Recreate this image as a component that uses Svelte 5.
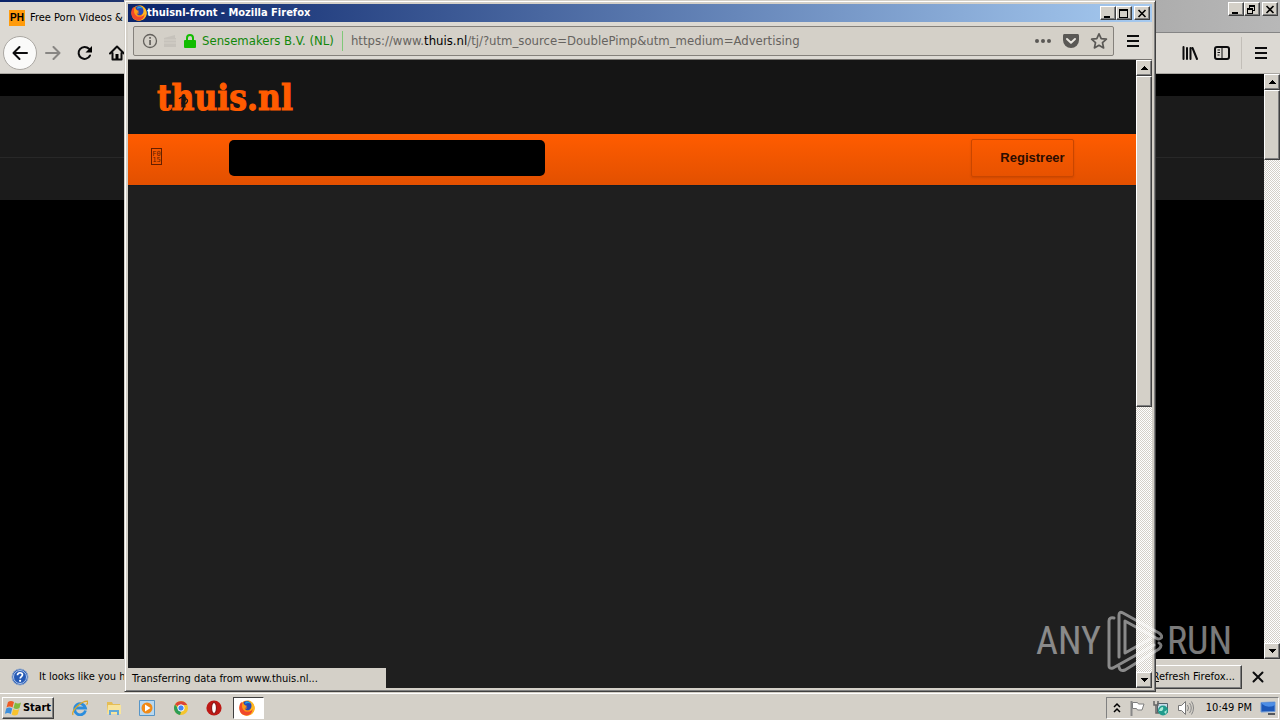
<script>
  let query = $state('');
  const launchers = ['Internet Explorer', 'Explorer', 'Media Player', 'Chrome', 'Opera'];
</script>

{#snippet firefox(size)}
  <svg width={size} height={size} viewBox="0 0 16 16" aria-hidden="true">
    <circle cx="8" cy="8" r="7.6" fill="#ff8a12" />
    <path d="M8 .3c4 0 7.7 3.3 7.7 7.7S12.4 15.7 8 15.7c-3 0-5.600-1.500-7-4 3 2.500 8 2.300 10-1C12.500 7 11 2 8 .3z" fill="#ffb820" />
    <path d="M1 11.500C-.5 7.500.5 4 2.500 1.800c0 1 .3 1.700 1 2.200C2.500 7 4 11.500 8 11.800c4 0 5-2 5.500-3 .3 4-3 6.700-6 6.600C4 15.300 2 13.500 1 11.500z" fill="#f0492c" />
    <path d="M4.500 2.200C7 .2 10.800.8 12 3.500c1.200 3 .2 5.800-2.500 6.800-2.500.3-4-.5-4.200-2.100 1 .7 2.200.6 3.200-.4-1.700-.3-3-1-2.600-2.600-.8-.7-1.300-1.900-1.400-3z" fill="#2747b8" />
    <path d="M6.500 1.600c2-.6 4.500.1 5.500 2.200-2-1-3.800-1-5.800.4z" fill="#26a6e0" />
    <path d="M3.300 4c1 0 2 .4 2.700 1.200L8.300 6 6.200 7.300C5 8.500 6 10 8 10.300c-3 1-5.500-1.500-4.700-6.300z" fill="#ff9b17" />
  </svg>
{/snippet}

{#snippet hamburger()}
  <svg width="16" height="16" viewBox="0 0 16 16" aria-hidden="true" shape-rendering="crispEdges">
    <path d="M2 3h12M2 8h12M2 13h12" stroke="#0c0c0d" stroke-width="2" />
  </svg>
{/snippet}

{#snippet scrollbar(share)}
  <div class="scrollbar">
    <button class="bevel scroll-step" aria-label="Scroll up">
      <svg width="8" height="4" viewBox="0 0 8 4" shape-rendering="crispEdges"><path d="M0 4 4 0l4 4z" /></svg>
    </button>
    <div class="track"><div class="bevel thumb" style="height: {share}%"></div></div>
    <button class="bevel scroll-step" aria-label="Scroll down">
      <svg width="8" height="4" viewBox="0 0 8 4" shape-rendering="crispEdges"><path d="m0 0 4 4 4-4z" /></svg>
    </button>
  </div>
{/snippet}

{#snippet controls(restored)}
  <div class="controls">
    <button class="bevel" aria-label="Minimize">
      <svg width="10" height="9" shape-rendering="crispEdges"><path d="M1 7h6v2H1z" /></svg>
    </button>
    <button class="bevel" aria-label={restored ? 'Maximize' : 'Restore'}>
      <svg width="10" height="9" viewBox="0 0 10 9" shape-rendering="crispEdges">
        {#if restored}
          <path d="M0 0h9v9H0zM1 2v6h7V2z" fill-rule="evenodd" />
        {:else}
          <path d="M2 0h6v6H6V5h1V2H3v1H2zM0 3h6v6H0zM1 5v3h4V5z" fill-rule="evenodd" />
        {/if}
      </svg>
    </button>
    <button class="bevel close" aria-label="Close">
      <svg width="10" height="9" viewBox="0 0 10 9"><path d="m1.500 1 7 7m0-7-7 7" stroke="#000" stroke-width="1.600" /></svg>
    </button>
  </div>
{/snippet}

<div class="desktop">
  <section class="browser" aria-label="Browser">
    <header class="tabstrip">
      <div class="tab"><span class="favicon">PH</span><span>Free Porn Videos &amp;</span></div>
      <div class="strip-end">{@render controls(false)}</div>
    </header>
    <nav class="toolbar">
      <button class="tool back" aria-label="Back">
        <svg width="16" height="16" viewBox="0 0 16 16"><path d="M15 8H2M7.500 2 1.500 8l6 6" class="line" /></svg>
      </button>
      <button class="tool" aria-label="Forward">
        <svg class="dim" width="16" height="16" viewBox="0 0 16 16"><path d="M1 8h13M8.500 2l6 6-6 6" class="line" /></svg>
      </button>
      <button class="tool" aria-label="Reload">
        <svg width="16" height="16" viewBox="0 0 16 16"><path d="M13 10.500A6 6 0 1 1 12 3.800" class="line" /><path d="M15 1v6.500H8.500z" /></svg>
      </button>
      <button class="tool" aria-label="Home">
        <svg width="16" height="16" viewBox="0 0 16 16"><path d="M1 8.500 8 1.500l7 7M3.500 8v6.500h9V8" class="line" /><path d="M6.500 9h3v5h-3z" /></svg>
      </button>
      <span class="grow"></span>
      <button class="tool" aria-label="Library">
        <svg width="16" height="16" viewBox="0 0 16 16"><path d="M1.500 2v12M5 3v11M8.500 3v11M10.500 3l4.500 11" class="line" /></svg>
      </button>
      <button class="tool" aria-label="Sidebars">
        <svg width="16" height="16" viewBox="0 0 16 16"><rect x="1" y="2" width="14" height="12" rx="2" class="line" /><path d="M8 2v12M3.500 5h2.500M3.500 7.500h2.500M3.500 10h2" fill="none" stroke="#0c0c0d" /></svg>
      </button>
      <span class="tool-rule"></span>
      <button class="tool menu" aria-label="Menu">{@render hamburger()}</button>
    </nav>
    <div class="viewport">
      <div class="dark-page"><div class="dark-head"></div><div class="dark-sub"></div></div>
      {@render scrollbar(12.7)}
    </div>
    <footer class="notice">
      <svg width="18" height="18" viewBox="0 0 18 18" aria-hidden="true">
        <circle cx="9" cy="9" r="8" fill="#2459b5" stroke="#8ea6c9" />
        <circle cx="9" cy="9" r="6.500" fill="none" stroke="#d4e2f7" stroke-width=".8" />
        <path d="M6.500 7.200c0-3.200 5-3.200 5-.4 0 1.800-2.300 1.800-2.300 3.700" fill="none" stroke="#fff" stroke-width="1.700" /><circle cx="9.100" cy="12.800" r="1.100" fill="#fff" />
      </svg>
      <span class="notice-text">It looks like you ha</span>
      <span class="grow"></span>
      <button class="bevel refresh"><span><u>R</u>efresh Firefox...</span></button>
      <button class="tool dismiss" aria-label="Dismiss">
        <svg width="12" height="12" viewBox="0 0 12 12"><path d="m1.500 1.500 9 9m0-9-9 9" class="line" /></svg>
      </button>
    </footer>
  </section>

  <section class="popup" aria-label="thuisnl-front">
    <header class="titlebar">
      {@render firefox(16)}
      <h1>thuisnl-front - Mozilla Firefox</h1>
      {@render controls(true)}
    </header>
    <nav class="location">
      <div class="urlbar">
        <svg width="16" height="16" viewBox="0 0 16 16" aria-hidden="true"><circle cx="8" cy="8" r="6.500" fill="none" stroke="#63605c" stroke-width="1.300" /><path d="M7.200 7h1.700v5H7.200zM7.200 4h1.700v1.700H7.200z" fill="#63605c" /></svg>
        <svg width="16" height="16" viewBox="0 0 16 16" aria-hidden="true"><path d="M2 5 13 2v3h1v9H2z" fill="#c6c2bb" /><path d="M2 7h12M2 10h12" stroke="#d4d0c8" /></svg>
        <svg width="16" height="16" viewBox="0 0 16 16" aria-hidden="true"><rect x="2" y="7" width="12" height="8" rx="1" fill="#12bc00" /><path d="M5 8V5a3 3 0 0 1 6 0v3" fill="none" stroke="#12bc00" stroke-width="2" /></svg>
        <span class="owner">Sensemakers B.V. (NL)</span>
        <span class="address">https://www.<b>thuis.nl</b>/tj/?utm_source=DoublePimp&amp;utm_medium=Advertising</span>
        <div class="actions">
          <button aria-label="Page actions"><svg width="18" height="18" viewBox="0 0 18 18" fill="#5a5855"><circle cx="3" cy="9" r="2" /><circle cx="9" cy="9" r="2" /><circle cx="15" cy="9" r="2" /></svg></button>
          <button aria-label="Save to Pocket"><svg width="18" height="18" viewBox="0 0 18 18"><path d="M2.500 2h13C16.400 2 17 2.600 17 3.500V8a8 8 0 0 1-16 0V3.500C1 2.600 1.600 2 2.500 2z" fill="#5a5855" /><path d="m5 7 4 3.700L13 7" fill="none" stroke="#e8e5df" stroke-width="2" stroke-linecap="round" stroke-linejoin="round" /></svg></button>
          <button aria-label="Bookmark"><svg width="18" height="18" viewBox="0 0 18 18"><path d="m9 1.800 2.200 4.800 5.200.6-3.900 3.500 1.100 5.200L9 13.300l-4.600 2.600 1.100-5.200-3.900-3.500 5.200-.6z" fill="none" stroke="#5a5855" stroke-width="1.700" stroke-linejoin="round" /></svg></button>
        </div>
      </div>
      <button class="tool popup-menu" aria-label="Menu">{@render hamburger()}</button>
    </nav>
    <div class="viewport">
      <main>
        <div class="brand">
          <a href="#home" aria-label="thuis.nl">thuis.nl
            <svg width="12" height="16" viewBox="0 0 12 16" aria-hidden="true"><path d="M2 3c2-3 7-2 7 0S5 5 5 7s3 1 2 4-2 2-2 5M9 3c3 1 1 4-1 5" fill="none" stroke="#151515" stroke-width="1.300" /></svg>
          </a>
        </div>
        <div class="orange">
          <a class="home" href="#home" aria-label="Home"><span>F0</span><span>15</span></a>
          <input class="search" type="text" aria-label="Search" bind:value={query} />
          <button class="register">Registreer</button>
        </div>
      </main>
      {@render scrollbar(55.5)}
      <div class="status">Transferring data from www.thuis.nl...</div>
    </div>
  </section>

  <div class="watermark" aria-hidden="true">
    <span>ANY</span>
    <svg width="58" height="64" viewBox="0 0 58 64">
      <g fill="none" stroke="#fff" stroke-width="3" stroke-linejoin="round" stroke-linecap="round">
        <path d="M9 9Q4 8 4 12v45q0 3 4 2l41-23" />
        <path d="M14 48V6q0-4 4-2l36 20q4 3 2 5-2 2-5 0L20 12v32l25-14" />
        <path d="M14 58q1 5 6 3l34-21q4-4 0-6" />
      </g>
    </svg>
    <span>RUN</span>
  </div>

  <footer class="taskbar">
    <button class="bevel start">
      <svg width="17" height="16" viewBox="0 0 17 16" aria-hidden="true"><path d="M3 2q3-2 6 0L7.500 7.500q-3-2-6 0z" fill="#ee5b24" /><path d="M10 2.500q3 2 6 0L14.500 8q-3 2-6 0z" fill="#82b93c" /><path d="M1.200 8.500q3-2 6 0L5.800 14q-3-2-6 0z" fill="#3d8fdc" /><path d="M8.200 9q3 2 6 0l-1.500 5.500q-3 2-6 0z" fill="#f9c32c" /></svg>
      <span>Start</span>
    </button>
    <div class="launchers">
      {#each launchers as name, i}
        <button aria-label={name}>
          <svg width="16" height="16" viewBox="0 0 16 16">
            {#if i === 0}
              <path d="M13.500 10.500A5.500 5.500 0 1 1 13.500 8H4" fill="none" stroke="#2b8ddd" stroke-width="2.800" /><path d="M1 15C-1 11 9 1 15.500 1.200c1 1-.5 3-1 3.500" fill="none" stroke="#d9a72c" stroke-width="1.300" />
            {:else if i === 1}
              <path d="M1 2h5l1 2h7v10H1z" fill="#e5bd55" /><path d="M2 5h13v9H1z" fill="#f8e49c" /><path d="M3 15v-5h10v5h-2v-3H5v3z" fill="#62a9d8" />
            {:else if i === 2}
              <path d="M.5.5h15v15H.5z" fill="#b9d8ef" stroke="#5795c7" /><circle cx="8" cy="8" r="5.500" fill="#f18a16" /><path d="m6 4.500 5.500 3.500L6 11.500z" fill="#fff" />
            {:else if i === 3}
              <circle cx="8" cy="8" r="7" fill="#f5c52d" /><path d="M8 8 2 4.500A7 7 0 0 1 14.200 5H8z" fill="#db4437" /><path d="M2 4.500 8 12l-1 3A7 7 0 0 1 2 4.500z" fill="#2c9d55" /><circle cx="8" cy="8" r="3.200" fill="#4285f4" stroke="#fff" />
            {:else}
              <circle cx="8" cy="8" r="7.600" fill="#bd1915" /><ellipse cx="8" cy="8" rx="2.400" ry="5.500" fill="#fff" stroke="#7d0d0c" />
            {/if}
          </svg>
        </button>
      {/each}
    </div>
    <button class="running" aria-label="Mozilla Firefox">{@render firefox(16)}</button>
    <div class="tray">
      <svg width="8" height="12" viewBox="0 0 8 12" aria-hidden="true"><path d="m1 5 3-3 3 3M1 10l3-3 3 3" fill="none" stroke="#000" stroke-width="1.500" /></svg>
      <svg width="16" height="16" viewBox="0 0 16 16" aria-hidden="true"><path d="M2.500 1v15" stroke="#888" stroke-width="2" /><path d="M3.500 2.500h5l1 1.500h5.500l-2 6H8.500l-1-1.500h-4z" fill="#fff" stroke="#7e7e7e" /></svg>
      <svg width="16" height="16" viewBox="0 0 16 16" aria-hidden="true"><path d="M4.500 3.500h10v9h-10z" fill="#c5dce8" stroke="#52616b" /><path d="M1 1v4h4V1M3 5v8h3" fill="none" stroke="#666" stroke-width="1.500" /><circle cx="10" cy="10.500" r="5" fill="#209b8c" /><path d="M6 11q1-4 4-4 1 2-1 4zM11 12l3-2-1 4z" fill="#a6ead8" /></svg>
      <svg width="18" height="16" viewBox="0 0 18 16" aria-hidden="true"><path d="M1.500 5.500h3l4-4v13l-4-4h-3z" fill="#fff" stroke="#777" /><path d="M10.500 5q2 3 0 6M12.500 3q3.500 5 0 10M14.500 1.500q4 6.500 0 13" fill="none" stroke="#858585" /></svg>
      <time>10:49 PM</time>
      <svg width="16" height="14" viewBox="0 0 16 14" aria-hidden="true"><path d="M1 1.500 15 1v9.500L1 11z" fill="#1d58b8" stroke="#6f9bd8" /><path d="M2 3q6 5 13 1v-2.500L2 2z" fill="#4d8ee6" /><path d="M8 13h7" stroke="#53575d" stroke-width="2" /></svg>
    </div>
  </footer>
</div>

<style>
  :global(body) { margin: 0; background: #000; }
  .desktop {
    position: relative;
    display: flex;
    flex-direction: column;
    height: 100vh;
    overflow: hidden;
    font: 11px/14px "DejaVu Sans Condensed", "DejaVu Sans", sans-serif;
    color: #000;
    background: #d4d0c8;
  }
  .desktop :global(*) { box-sizing: border-box; }
  button { font: inherit; color: inherit; padding: 0; border: 0; background: none; display: flex; align-items: center; justify-content: center; }
  svg { display: block; flex: none; }
  .bevel {
    background: #d4d0c8;
    border: 1px solid;
    border-color: #fff #404040 #404040 #fff;
    box-shadow: inset -1px -1px #808080;
  }
  .line { fill: none; stroke: #0c0c0d; stroke-width: 2; stroke-linecap: round; stroke-linejoin: round; }
  .dim { opacity: .4; }
  .grow { flex: 1; }

  .browser { flex: 1; min-height: 0; display: flex; flex-direction: column; }
  .tabstrip { display: flex; height: 33px; background: linear-gradient(90deg, #0a246a, #808080 50%, #b8b8b8); }
  .tab { display: flex; align-items: center; gap: 5px; width: 220px; margin-top: 2px; padding-left: 9px; background: #dcd9d3; white-space: nowrap; }
  .favicon { width: 16px; height: 16px; background: #ff9b0b; font: bold 10px/16px "Liberation Sans", sans-serif; text-align: center; }
  .strip-end { flex: 1; display: flex; justify-content: flex-end; align-items: flex-start; padding: 2px 2px 0 0; border-bottom: 1px solid #858585; }
  .controls { display: flex; }
  .controls button { width: 16px; height: 14px; }
  .controls .close { margin-left: 2px; }
  .toolbar { display: flex; align-items: center; height: 41px; padding: 0 3px; background: #dcd9d3; border-bottom: 1px solid #aaa7a2; }
  .tool { width: 32px; height: 32px; }
  .back { width: 34px; height: 34px; border: 1px solid #aaa7a2; border-radius: 50%; background: #fafaf9; }
  .tool-rule { width: 1px; height: 32px; margin: 0 3px; background: #c2beb8; }
  .viewport { position: relative; flex: 1; min-height: 0; display: flex; }
  .dark-page { flex: 1; padding-top: 22px; background: #000; }
  .dark-head { height: 62px; background: #1b1b1b; border-bottom: 1px solid #282828; }
  .dark-sub { height: 42px; background: #1b1b1b; }
  .notice { display: flex; align-items: center; height: 34px; padding: 0 6px 0 11px; border-top: 1px solid #dedbd5; background: #d4d0c8; }
  .notice-text { margin-left: 10px; white-space: nowrap; }
  .refresh { height: 24px; padding: 0 6px; white-space: nowrap; }

  .scrollbar { width: 16px; display: flex; flex-direction: column; flex: none; }
  .scroll-step { height: 16px; flex: none; }
  .track { flex: 1; min-height: 0; background: repeating-conic-gradient(#fff 0 25%, #d4d0c8 0 50%) 0 0 / 2px 2px; }

  .popup {
    position: absolute;
    inset: 0 124px 28px 124px;
    display: flex;
    flex-direction: column;
    padding: 3px;
    background: #d4d0c8;
    border: 1px solid;
    border-color: #d4d0c8 #404040 #404040 #d4d0c8;
    box-shadow: inset 1px 1px #fff, inset -1px -1px #808080;
  }
  .titlebar { display: flex; align-items: center; height: 18px; padding: 0 2px 0 3px; background: linear-gradient(90deg, #0a246a, #a6caf0); }
  h1 { flex: 1; margin: 0; font-size: 11px; line-height: 18px; color: #fff; }
  .location { display: flex; align-items: center; height: 38px; padding: 0 3px 0 5px; background: #dcd9d3; border-bottom: 1px solid #777470; }
  .urlbar { flex: 1; min-width: 0; display: flex; align-items: center; gap: 4px; height: 30px; padding: 0 5px 0 8px; border: 1px solid #85817c; border-radius: 2px; background: #d4d0c8; font-size: 13px; white-space: nowrap; }
  .owner { height: 20px; line-height: 20px; padding-right: 8px; color: #12870b; border-right: 1px solid #7fc878; }
  .address { flex: 1; padding-left: 4px; line-height: 20px; color: #66635f; overflow: hidden; }
  .address b { font-weight: normal; color: #000; }
  .actions { display: flex; gap: 10px; }
  .popup-menu { margin-left: 3px; }

  main { flex: 1; min-width: 0; background: #1f1f1f; }
  .brand { height: 74px; padding: 18px 0 0 29px; background: #151515; }
  .brand a { position: relative; display: inline-block; color: #ff5b00; text-decoration: none; font: bold 35px/40px "DejaVu Serif Condensed", "DejaVu Serif", serif; -webkit-text-stroke: 1px #ff5b00; }
  .brand svg { position: absolute; left: 20px; top: 18px; }
  .orange { display: flex; align-items: center; height: 52px; padding: 0 62px 3px 23px; background: linear-gradient(#ff5c00, #e25000); border-bottom: 1px solid #141c24; }
  .home { display: flex; flex-direction: column; width: 11px; height: 17px; padding-top: 2px; margin: 0 67px 3px 0; border: 1px solid #651f00; color: #651f00; font: 7px/6px "DejaVu Sans Mono", monospace; text-align: center; text-decoration: none; }
  .search { width: 316px; height: 36px; padding: 0 12px; border: 0; border-radius: 5px; background: #000; color: #fff; }
  .register { width: 103px; height: 38px; margin-left: auto; padding-left: 20px; border: 1px solid #c94600; border-radius: 2px; box-shadow: 0 1px 2px #a83b0066; font: bold 13px/16px "Liberation Sans", sans-serif; color: #2b0d00; }
  .status { position: absolute; left: 0; bottom: 0; width: 258px; height: 20px; padding-left: 4px; line-height: 22px; background: #d4d0c8; white-space: nowrap; }

  .watermark { position: absolute; right: 48px; bottom: 47px; display: flex; align-items: center; gap: 4px; color: #fff; opacity: .48; font: 400 38px/64px "Roboto Condensed", "Liberation Sans Narrow", Roboto, sans-serif; pointer-events: none; }

  .taskbar { display: flex; align-items: center; height: 27px; padding: 2px 1px 1px 2px; border-top: 1px solid #fff; background: #d4d0c8; }
  .start { width: 52px; height: 22px; gap: 1px; font-weight: bold; }
  .launchers { display: flex; justify-content: space-between; width: 150px; margin: 0 11px 0 18px; }
  .running { width: 31px; height: 22px; padding-right: 3px; border: 1px solid; border-color: #404040 #fff #fff #404040; background: #fff; }
  .tray { display: flex; align-items: center; gap: 8px; height: 22px; margin-left: auto; padding: 0 2px 0 6px; border: 1px solid; border-color: #808080 #fff #fff #808080; }
  time { margin-left: 3px; }
</style>
